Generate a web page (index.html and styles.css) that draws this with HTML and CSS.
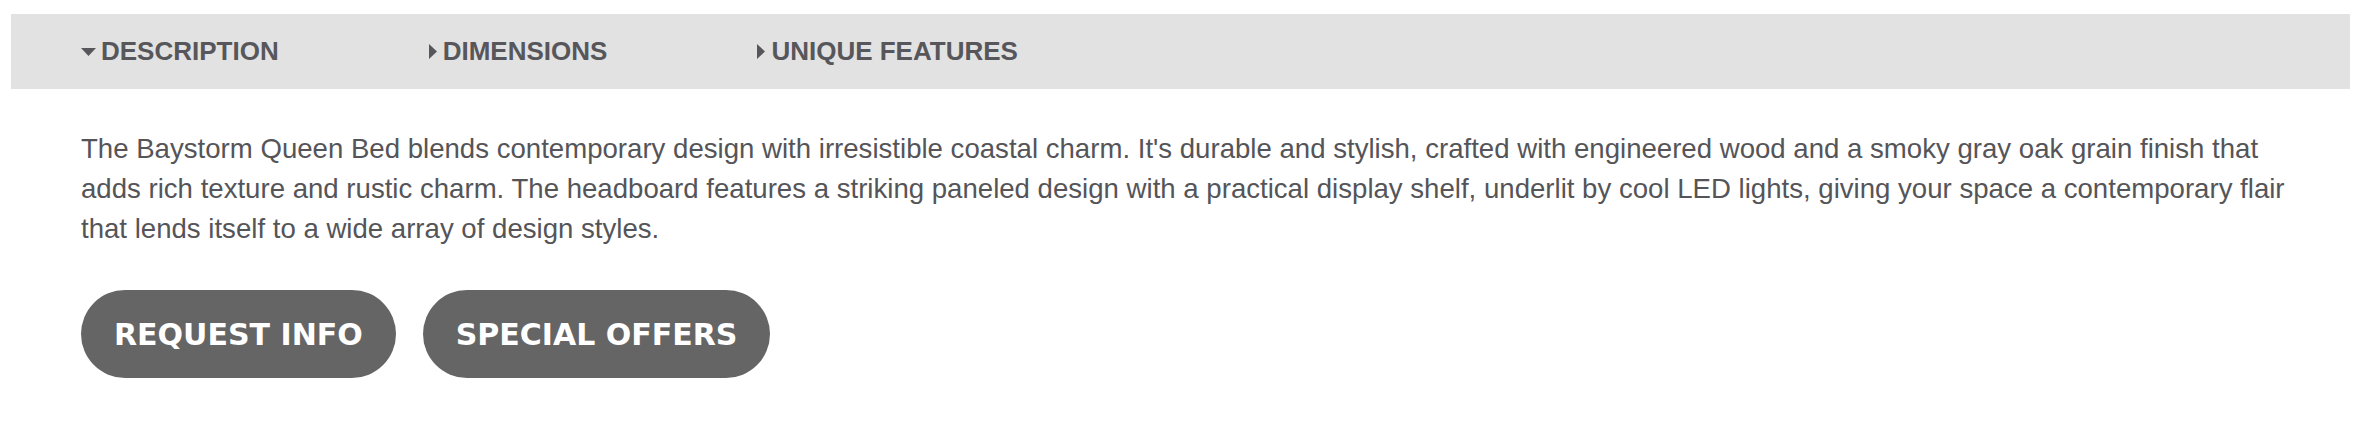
FILE: index.html
```html
<!DOCTYPE html>
<html lang="en">
<head>
<meta charset="utf-8">
<title>Baystorm Queen Bed</title>
<link rel="stylesheet" href="styles.css">
</head>
<body>
<div class="page">
  <nav class="tabs">
    <button class="tab tab-active" type="button">
      <svg class="caret caret-down" width="15" height="8" viewBox="0 0 15 8"><path d="M0 0H15L7.5 8Z"/></svg>
      DESCRIPTION
    </button>
    <button class="tab" type="button">
      <svg class="caret caret-right" width="8" height="15" viewBox="0 0 8 15"><path d="M0 0L8 7.5L0 15Z"/></svg>
      DIMENSIONS
    </button>
    <button class="tab" type="button">
      <svg class="caret caret-right" width="8" height="15" viewBox="0 0 8 15"><path d="M0 0L8 7.5L0 15Z"/></svg>
      UNIQUE FEATURES
    </button>
  </nav>
  <section class="panel">
    <p class="description">The Baystorm Queen Bed blends contemporary design with irresistible coastal charm. It's durable and stylish, crafted with engineered wood and a smoky gray oak grain finish that adds rich texture and rustic charm. The headboard features a striking paneled design with a practical display shelf, underlit by cool LED lights, giving your space a contemporary flair that lends itself to a wide array of design styles.</p>
    <div class="actions">
      <a class="btn" href="#">REQUEST INFO</a>
      <a class="btn" href="#">SPECIAL OFFERS</a>
    </div>
  </section>
</div>
</body>
</html>
```
FILE: styles.css
```css
html, body {
  margin: 0;
  background: #ffffff;
}

.page {
  padding: 14px 18px 0 11px;
}

.tabs {
  display: flex;
  align-items: center;
  gap: 150px;
  height: 75px;
  padding-left: 70px;
  background: #e2e2e2;
}

.tab {
  display: flex;
  align-items: center;
  padding: 0;
  border: 0;
  background: none;
  font-family: "Liberation Sans", Arial, sans-serif;
  font-weight: bold;
  font-size: 26px;
  color: #57575b;
  cursor: pointer;
}

.caret {
  fill: #57575b;
  flex: none;
}

.caret-down {
  margin-right: 5px;
}

.caret-right {
  margin-right: 6px;
}

.panel {
  padding: 40px 40px 0 70px;
}

.description {
  margin: 0;
  font-family: "Liberation Sans", Arial, sans-serif;
  font-size: 27.6px;
  line-height: 40px;
  color: #555559;
}

.actions {
  display: flex;
  gap: 27px;
  margin-top: 41px;
}

.btn {
  display: flex;
  align-items: center;
  height: 88px;
  padding: 0 33px;
  border-radius: 44px;
  background: #656565;
  color: #ffffff;
  text-decoration: none;
  font-family: "DejaVu Sans", sans-serif;
  font-weight: bold;
  font-size: 30px;
}
```
